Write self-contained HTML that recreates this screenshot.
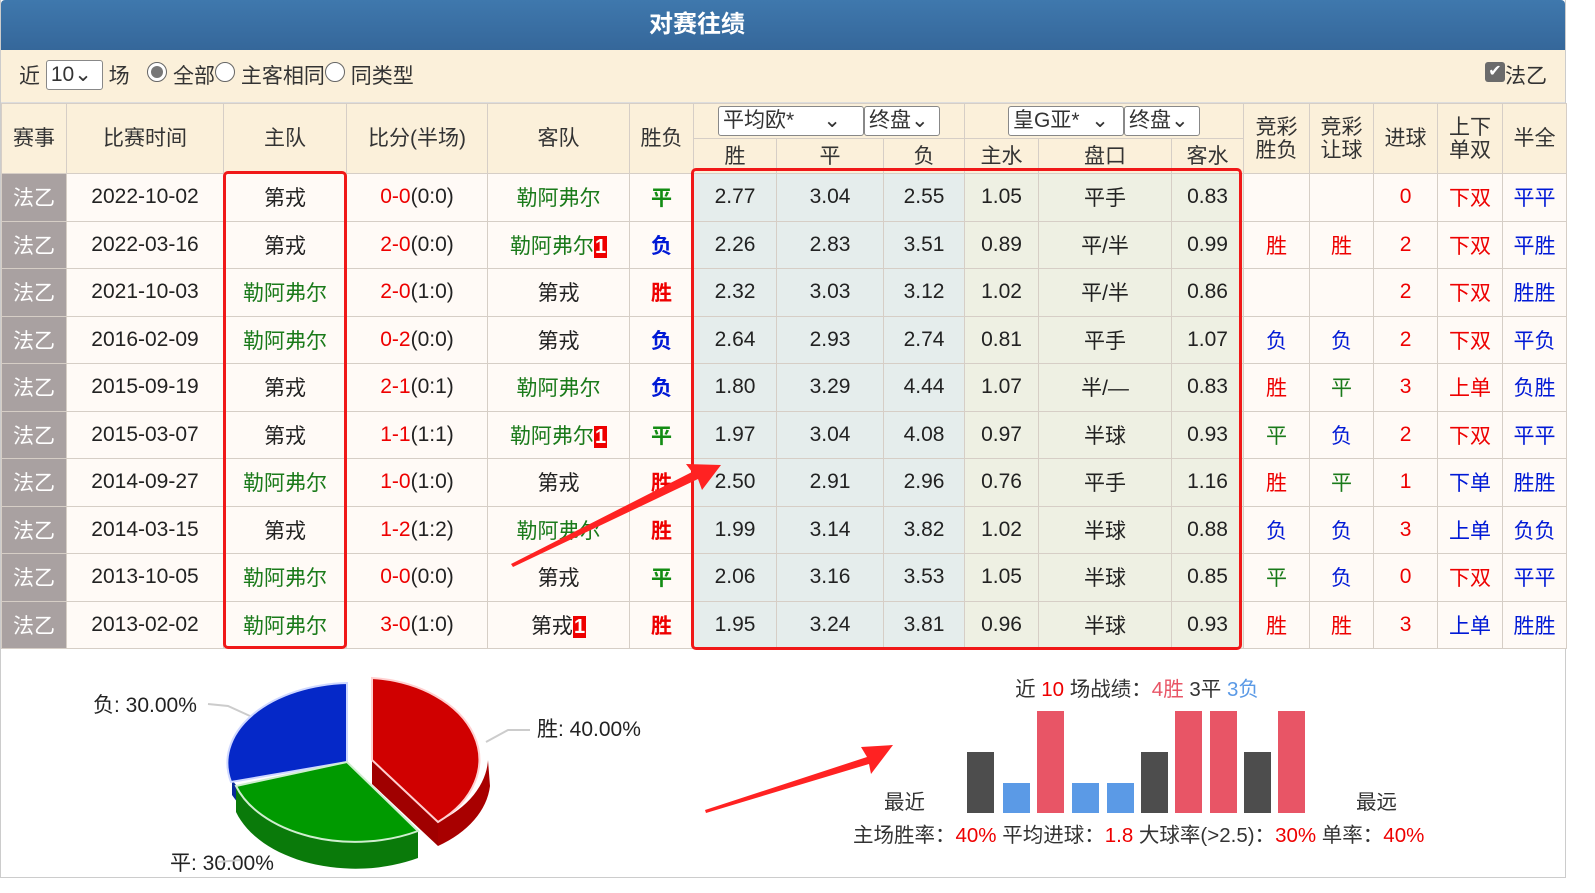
<!DOCTYPE html>
<html><head><meta charset="utf-8"><style>
*{margin:0;padding:0;box-sizing:border-box}
body{width:1595px;height:893px;background:#fff;font-family:"Liberation Sans","Noto Sans CJK SC",sans-serif;position:relative;overflow:hidden;color:#222}
#wrap{position:absolute;left:0;top:0;width:1566px;height:878px;border:1px solid #ccc;border-top:none}
#title{height:50px;background:linear-gradient(#3f78ad,#35679a);color:#fff;font-weight:bold;font-size:24px;line-height:50px;border-radius:4px 4px 0 0;position:relative}
#title span{position:absolute;left:648px;top:0}
#filter{height:53px;background:#fbf0da;font-size:21px;line-height:53px;padding-left:18px;position:relative;color:#333;border-bottom:1px solid #ddd}
.sel{display:inline-block;border:1px solid #888;background:#fff;border-radius:3px;height:30px;line-height:28px;padding:0 4px;vertical-align:middle;font-size:21px;margin-top:-4px;width:57px}
.rad{display:inline-block;width:20px;height:20px;border:1px solid #666;border-radius:50%;background:#fff;vertical-align:middle;margin-top:-10px;position:relative}
.rad.on::after{content:"";position:absolute;left:3px;top:3px;width:12px;height:12px;border-radius:50%;background:#777}
table{border-collapse:collapse;table-layout:fixed;width:1565px;font-size:21px}
td,th{border:1px solid #d6cec6;text-align:center;font-weight:normal;overflow:hidden;white-space:nowrap}
thead th{background:#fbf0da;color:#333;height:35px;line-height:23px}
tbody td{height:47.5px;background:#fffaf6}
tbody td.lg{background:#a9a1a1;color:#fff}
tbody td.o{background:#e5edec}
tbody td.a{background:#eef0e3}
.r{color:#e00}.g{color:#1a7a1a}.b{color:#0019d6}.gb{color:#138c13;font-weight:bold}.bb{color:#0019d6;font-weight:bold}.rb{color:#e00;font-weight:bold}
.bd{background:#e00;color:#fff;font-size:20px;font-weight:bold;padding:0 1px;line-height:22px;display:inline-block}
.hs{display:inline-block;border:1px solid #888;background:#fff;border-radius:3px;height:30px;line-height:28px;padding:0 4px;text-align:left;font-size:21px}
.box{position:absolute;border:3px solid #f01818;border-radius:5px}
</style></head><body>
<div id="wrap">
<div id="title"><span>对赛往绩</span></div>
<div id="filter">近 <span class="sel">10⌄</span> 场 &nbsp;&nbsp;<span class="rad on"></span> 全部<span class="rad"></span> 主客相同<span class="rad"></span> 同类型
<span style="position:absolute;right:18px;top:0"><span style="display:inline-block;width:20px;height:20px;background:#6b6b6b;border-radius:3px;color:#fff;font-size:16px;line-height:20px;text-align:center;vertical-align:middle;margin-top:-10px">✔</span>法乙</span></div>
<table>
<colgroup><col style="width:65px"><col style="width:157px"><col style="width:123px"><col style="width:141px"><col style="width:142px"><col style="width:64px"><col style="width:83px"><col style="width:107px"><col style="width:81px"><col style="width:74px"><col style="width:133px"><col style="width:72px"><col style="width:66px"><col style="width:64px"><col style="width:64px"><col style="width:65px"><col style="width:64px"></colgroup>
<thead>
<tr><th rowspan="2">赛事</th><th rowspan="2">比赛时间</th><th rowspan="2">主队</th><th rowspan="2">比分(半场)</th><th rowspan="2">客队</th><th rowspan="2">胜负</th>
<th colspan="3"><span class="hs" style="width:146px">平均欧*&nbsp;&nbsp;&nbsp;&nbsp;&nbsp;⌄</span><span class="hs" style="width:76px">终盘⌄</span></th>
<th colspan="3"><span class="hs" style="width:116px">皇G亚*&nbsp;&nbsp;⌄</span><span class="hs" style="width:76px">终盘⌄</span></th>
<th rowspan="2">竞彩<br>胜负</th><th rowspan="2">竞彩<br>让球</th><th rowspan="2">进球</th><th rowspan="2">上下<br>单双</th><th rowspan="2">半全</th></tr>
<tr><th>胜</th><th>平</th><th>负</th><th>主水</th><th>盘口</th><th>客水</th></tr>
</thead>
<tbody>
<tr><td class="lg">法乙</td><td>2022-10-02</td><td>第戎</td><td><span class="r">0-0</span>(0:0)</td><td class="g">勒阿弗尔</td><td class="gb">平</td><td class="o">2.77</td><td class="o">3.04</td><td class="o">2.55</td><td class="a">1.05</td><td class="a">平手</td><td class="a">0.83</td><td></td><td></td><td class="r">0</td><td class="r">下双</td><td class="b">平平</td></tr>
<tr><td class="lg">法乙</td><td>2022-03-16</td><td>第戎</td><td><span class="r">2-0</span>(0:0)</td><td class="g">勒阿弗尔<span class="bd">1</span></td><td class="bb">负</td><td class="o">2.26</td><td class="o">2.83</td><td class="o">3.51</td><td class="a">0.89</td><td class="a">平/半</td><td class="a">0.99</td><td class="r">胜</td><td class="r">胜</td><td class="r">2</td><td class="r">下双</td><td class="b">平胜</td></tr>
<tr><td class="lg">法乙</td><td>2021-10-03</td><td class="g">勒阿弗尔</td><td><span class="r">2-0</span>(1:0)</td><td>第戎</td><td class="rb">胜</td><td class="o">2.32</td><td class="o">3.03</td><td class="o">3.12</td><td class="a">1.02</td><td class="a">平/半</td><td class="a">0.86</td><td></td><td></td><td class="r">2</td><td class="r">下双</td><td class="b">胜胜</td></tr>
<tr><td class="lg">法乙</td><td>2016-02-09</td><td class="g">勒阿弗尔</td><td><span class="r">0-2</span>(0:0)</td><td>第戎</td><td class="bb">负</td><td class="o">2.64</td><td class="o">2.93</td><td class="o">2.74</td><td class="a">0.81</td><td class="a">平手</td><td class="a">1.07</td><td class="b">负</td><td class="b">负</td><td class="r">2</td><td class="r">下双</td><td class="b">平负</td></tr>
<tr><td class="lg">法乙</td><td>2015-09-19</td><td>第戎</td><td><span class="r">2-1</span>(0:1)</td><td class="g">勒阿弗尔</td><td class="bb">负</td><td class="o">1.80</td><td class="o">3.29</td><td class="o">4.44</td><td class="a">1.07</td><td class="a">半/—</td><td class="a">0.83</td><td class="r">胜</td><td class="g">平</td><td class="r">3</td><td class="r">上单</td><td class="b">负胜</td></tr>
<tr><td class="lg">法乙</td><td>2015-03-07</td><td>第戎</td><td><span class="r">1-1</span>(1:1)</td><td class="g">勒阿弗尔<span class="bd">1</span></td><td class="gb">平</td><td class="o">1.97</td><td class="o">3.04</td><td class="o">4.08</td><td class="a">0.97</td><td class="a">半球</td><td class="a">0.93</td><td class="g">平</td><td class="b">负</td><td class="r">2</td><td class="r">下双</td><td class="b">平平</td></tr>
<tr><td class="lg">法乙</td><td>2014-09-27</td><td class="g">勒阿弗尔</td><td><span class="r">1-0</span>(1:0)</td><td>第戎</td><td class="rb">胜</td><td class="o">2.50</td><td class="o">2.91</td><td class="o">2.96</td><td class="a">0.76</td><td class="a">平手</td><td class="a">1.16</td><td class="r">胜</td><td class="g">平</td><td class="r">1</td><td class="b">下单</td><td class="b">胜胜</td></tr>
<tr><td class="lg">法乙</td><td>2014-03-15</td><td>第戎</td><td><span class="r">1-2</span>(1:2)</td><td class="g">勒阿弗尔</td><td class="rb">胜</td><td class="o">1.99</td><td class="o">3.14</td><td class="o">3.82</td><td class="a">1.02</td><td class="a">半球</td><td class="a">0.88</td><td class="b">负</td><td class="b">负</td><td class="r">3</td><td class="b">上单</td><td class="b">负负</td></tr>
<tr><td class="lg">法乙</td><td>2013-10-05</td><td class="g">勒阿弗尔</td><td><span class="r">0-0</span>(0:0)</td><td>第戎</td><td class="gb">平</td><td class="o">2.06</td><td class="o">3.16</td><td class="o">3.53</td><td class="a">1.05</td><td class="a">半球</td><td class="a">0.85</td><td class="g">平</td><td class="b">负</td><td class="r">0</td><td class="r">下双</td><td class="b">平平</td></tr>
<tr><td class="lg">法乙</td><td>2013-02-02</td><td class="g">勒阿弗尔</td><td><span class="r">3-0</span>(1:0)</td><td>第戎<span class="bd">1</span></td><td class="rb">胜</td><td class="o">1.95</td><td class="o">3.24</td><td class="o">3.81</td><td class="a">0.96</td><td class="a">半球</td><td class="a">0.93</td><td class="r">胜</td><td class="r">胜</td><td class="r">3</td><td class="b">上单</td><td class="b">胜胜</td></tr>
</tbody></table>
</div>
<div class="box" style="left:223px;top:171px;width:124px;height:478px"></div>
<div class="box" style="left:691px;top:168px;width:551px;height:482px"></div>
<svg style="position:absolute;left:0;top:0" width="1595" height="893" font-family="Liberation Sans,Noto Sans CJK SC,sans-serif">
<g font-size="21" fill="#222">
<text x="93" y="712">负: 30.00%</text><text x="537" y="736">胜: 40.00%</text><text x="170" y="870">平: 30.00%</text></g>
<g stroke="#ccc" stroke-width="2" fill="none"><path d="M208,704 L228,706 L250,716"/><path d="M486,742 L508,730 L530,730"/><path d="M218,862 L240,860"/></g>
<path d="M232,780 L232,795 A125,80 0 0 0 240,805 L236,785 Z" fill="#0a2a9a"/>
<path d="M347,762 L347,683 A125,80 0 0 0 231,782 Z" fill="#0528c8" stroke="#cfd8ff" stroke-width="2"/>
<path d="M236,786 A125,80 0 0 0 418,831 L418,858 A125,80 0 0 1 236,812 Z" fill="#0a7a0a"/>
<path d="M347,762 L236,786 A125,80 0 0 0 418,831 Z" fill="#009a00" stroke="#cfeecf" stroke-width="2"/>
<path d="M372,760 L438,822 L438,846 L372,784 Z" fill="#a00000"/>
<path d="M488,760 A118,80 0 0 1 438,822 L438,846 A118,80 0 0 0 490,786 Z" fill="#a80000"/>
<path d="M372,760 L372,678 A118,82 0 0 1 438,822 Z" fill="#d00000" stroke="#ffd0d0" stroke-width="2"/>
<polygon points="511,564 692,472 686,464 721,465 702,490 698,479 513,567" fill="#f22"/>
<polygon points="705,810 867,757 861,747 893,745 871,774 869,764 706,813" fill="#f22"/>
<g>
<rect x="967" y="752" width="27" height="61" fill="#4d4d4d"/>
<rect x="1003" y="783" width="27" height="30" fill="#5b9ae6"/>
<rect x="1037" y="711" width="27" height="102" fill="#e85566"/>
<rect x="1072" y="783" width="27" height="30" fill="#5b9ae6"/>
<rect x="1107" y="783" width="27" height="30" fill="#5b9ae6"/>
<rect x="1141" y="752" width="27" height="61" fill="#4d4d4d"/>
<rect x="1175" y="711" width="27" height="102" fill="#e85566"/>
<rect x="1210" y="711" width="27" height="102" fill="#e85566"/>
<rect x="1244" y="752" width="27" height="61" fill="#4d4d4d"/>
<rect x="1278" y="711" width="27" height="102" fill="#e85566"/>
</g>
<g font-size="20.5" fill="#333">
<text x="1137" y="696" text-anchor="middle">近 <tspan fill="#e00">10</tspan> 场战绩：<tspan fill="#e85566">4胜</tspan> 3平 <tspan fill="#5b9ae6">3负</tspan></text>
<text x="884" y="809">最近</text><text x="1356" y="809">最远</text>
<text x="853" y="842">主场胜率：<tspan fill="#e00">40%</tspan> 平均进球：<tspan fill="#e00">1.8</tspan> 大球率(&gt;2.5)：<tspan fill="#e00">30%</tspan> 单率：<tspan fill="#e00">40%</tspan></text>
</g>
</svg>
</body></html>
